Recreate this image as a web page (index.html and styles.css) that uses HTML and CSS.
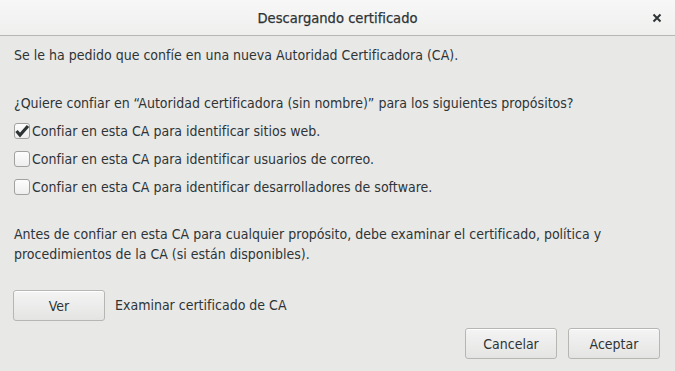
FILE: index.html
```html
<!DOCTYPE html>
<html lang="es">
<head>
<meta charset="utf-8">
<link rel="stylesheet" href="styles.css">
</head>
<body>
<div class="dialog">
  <header class="titlebar">
    <span class="title">Descargando certificado</span>
    <span class="close">
      <svg width="10" height="10" viewBox="0 0 10 10"><path d="M1.5 1.5 L8.5 8.5 M8.5 1.5 L1.5 8.5" stroke="#2e3436" stroke-width="2" stroke-linecap="butt"/></svg>
    </span>
  </header>
  <main class="content">
    <p class="intro">Se le ha pedido que confíe en una nueva Autoridad Certificadora (CA).</p>
    <p class="question">¿Quiere confiar en “Autoridad certificadora (sin nombre)” para los siguientes propósitos?</p>
    <ul class="checks">
      <li class="check"><span class="box checked"><svg class="tick" width="16" height="14" viewBox="0 0 16 14"><path d="M2.5 7 L6 11 L14 2" fill="none" stroke="#2e3436" stroke-width="3.2" stroke-linejoin="miter"/></svg></span>Confiar en esta CA para identificar sitios web.</li>
      <li class="check"><span class="box"></span>Confiar en esta CA para identificar usuarios de correo.</li>
      <li class="check"><span class="box"></span>Confiar en esta CA para identificar desarrolladores de software.</li>
    </ul>
    <p class="note">Antes de confiar en esta CA para cualquier propósito, debe examinar el certificado, política y procedimientos de la CA (si están disponibles).</p>
    <div class="view-row">
      <button class="btn">Ver</button>
      <span class="view-label">Examinar certificado de CA</span>
    </div>
    <div class="actions">
      <button class="btn">Cancelar</button>
      <button class="btn">Aceptar</button>
    </div>
  </main>
</div>
</body>
</html>
```

FILE: styles.css
```css
* { box-sizing: border-box; }
html, body { margin: 0; padding: 0; }
body {
  width: 675px;
  height: 371px;
  background: #e8e8e7;
  font-family: "DejaVu Sans Condensed", "DejaVu Sans", sans-serif;
  font-size: 14px;
  color: #2e3436;
  overflow: hidden;
}
.dialog {
  display: flex;
  flex-direction: column;
  height: 371px;
}
.titlebar {
  height: 36px;
  background: linear-gradient(#f7f7f7, #efefee);
  border-bottom: 1px solid #b6b6b3;
  display: flex;
  align-items: center;
  justify-content: center;
  position: relative;
  flex: none;
}
.title {
  font-size: 14.6px;
  font-weight: 500;
  color: #2e3436;
  -webkit-text-stroke: 0.25px #2e3436;
}
.close {
  position: absolute;
  right: 13px;
  top: 13px;
  width: 10px;
  height: 10px;
  display: flex;
}
.content {
  padding: 10px 14px 0 14px;
  display: flex;
  flex-direction: column;
  flex: 1;
}
p { margin: 0; }
.intro { line-height: 18px; }
.question { margin-top: 30px; line-height: 18px; }
.checks {
  list-style: none;
  margin: 5px 0 0 0;
  padding: 0;
  display: flex;
  flex-direction: column;
}
.check {
  display: flex;
  align-items: center;
  height: 28px;
}
.box {
  width: 16px;
  height: 16px;
  border: 1px solid #a1a1a0;
  border-radius: 3px;
  background: linear-gradient(#fdfdfd, #eeeeee);
  margin-right: 2px;
  display: flex;
  align-items: center;
  justify-content: flex-start;
  flex: none;
  overflow: visible;
}
.tick { flex: none; margin-left: -1px; }
.note { margin-top: 23px; line-height: 20px; }
.view-row {
  margin-top: 26px;
  display: flex;
  align-items: center;
  gap: 10px;
  margin-left: -1px;
}
.btn {
  font: inherit;
  color: #2e3436;
  width: 92px;
  height: 31px;
  border: 1px solid #b6b6b3;
  border-radius: 3px;
  background: linear-gradient(#f4f4f4, #e4e4e3);
  box-shadow: inset 0 1px #ffffff;
  padding: 0;
}
.view-label { margin-top: -2px; }
.actions {
  margin-top: 7px;
  display: flex;
  justify-content: flex-end;
  gap: 11px;
  margin-right: 1px;
}
```
